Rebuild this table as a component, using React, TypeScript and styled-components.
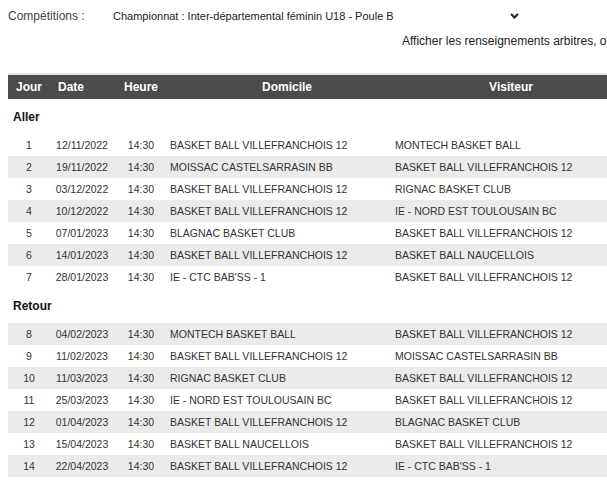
import styled, { createGlobalStyle } from "styled-components";

const GlobalStyle = createGlobalStyle`
    html, body {
        margin: 0;
        padding: 0;
        background-color: #ffffff;
        overflow: hidden;
    }
    body {
        font-family: "Liberation Sans", Arial, sans-serif;
        color: #333333;
    }
`;

const Page = styled.div`
    width: 607px;
    height: 489px;
    overflow: hidden;
`;

const FilterRow = styled.div`
    display: flex;
    align-items: center;
    height: 20px;
    padding: 6px 0 0 8px;
`;

const FilterLabel = styled.span`
    width: 104px;
    font-size: 12px;
    color: #444444;
`;

const SelectBox = styled.div`
    display: flex;
    align-items: center;
    justify-content: space-between;
    width: 406px;
    font-size: 11px;
    color: #222222;
    padding-left: 1px;
`;

const InfoLine = styled.div`
    margin-top: 8px;
    padding-left: 402px;
    height: 14px;
    line-height: 14px;
    font-size: 12px;
    color: #222222;
    white-space: nowrap;
    overflow: hidden;
`;

const Table = styled.div`
    margin: 25px 0 0 8px;
    width: 623px;
    border-top: 2px solid #e4e4e4;
`;

const columns = "42px 64px 54px 223px 1fr";

const HeadRow = styled.div`
    display: grid;
    grid-template-columns: ${columns};
    height: 24px;
    align-items: center;
    background-color: #4b4b4b;
    color: #ffffff;
    font-size: 12px;
    font-weight: 700;
`;

const HeadCell = styled.div<{ $align?: "left" | "center"; $pad?: number }>`
    text-align: ${(p) => p.$align ?? "center"};
    padding-left: ${(p) => p.$pad ?? 0}px;
`;

const SectionRow = styled.div`
    height: 35px;
    padding: 11px 0 0 5px;
    box-sizing: border-box;
    font-size: 12px;
    font-weight: 700;
    color: #111111;
`;

const Row = styled.div<{ $shade: boolean }>`
    display: grid;
    grid-template-columns: ${columns};
    height: 22px;
    align-items: center;
    background-color: ${(p) => (p.$shade ? "#ebebeb" : "#ffffff")};
    font-size: 10.5px;
    color: #333333;
    white-space: nowrap;
`;

const Cell = styled.div<{ $align?: "left" | "center"; $pad?: number }>`
    text-align: ${(p) => p.$align ?? "center"};
    padding-left: ${(p) => p.$pad ?? 0}px;
`;

type Match = [number, string, string, string];

const BBV = "BASKET BALL VILLEFRANCHOIS 12";

const aller: Match[] = [
    [1, "12/11/2022", BBV, "MONTECH BASKET BALL"],
    [2, "19/11/2022", "MOISSAC CASTELSARRASIN BB", BBV],
    [3, "03/12/2022", BBV, "RIGNAC BASKET CLUB"],
    [4, "10/12/2022", BBV, "IE - NORD EST TOULOUSAIN BC"],
    [5, "07/01/2023", "BLAGNAC BASKET CLUB", BBV],
    [6, "14/01/2023", BBV, "BASKET BALL NAUCELLOIS"],
    [7, "28/01/2023", "IE - CTC BAB'SS - 1", BBV],
];

const retour: Match[] = [
    [8, "04/02/2023", "MONTECH BASKET BALL", BBV],
    [9, "11/02/2023", BBV, "MOISSAC CASTELSARRASIN BB"],
    [10, "11/03/2023", "RIGNAC BASKET CLUB", BBV],
    [11, "25/03/2023", "IE - NORD EST TOULOUSAIN BC", BBV],
    [12, "01/04/2023", BBV, "BLAGNAC BASKET CLUB"],
    [13, "15/04/2023", "BASKET BALL NAUCELLOIS", BBV],
    [14, "22/04/2023", BBV, "IE - CTC BAB'SS - 1"],
];

function Chevron() {
    return (
        <svg width="9" height="6" viewBox="0 0 9 6">
            <path d="M1 1 L4.5 4.5 L8 1" fill="none" stroke="#222" strokeWidth="2" />
        </svg>
    );
}

function Rows({ list }: { list: Match[] }) {
    return (
        <>
            {list.map(([jour, date, home, away]) => (
                <Row key={jour} $shade={jour % 2 === 0}>
                    <Cell>{jour}</Cell>
                    <Cell>{date}</Cell>
                    <Cell>14:30</Cell>
                    <Cell $align="left" $pad={2}>{home}</Cell>
                    <Cell $align="left" $pad={4}>{away}</Cell>
                </Row>
            ))}
        </>
    );
}

function App() {
    return (
        <Page>
            <GlobalStyle />
            <FilterRow>
                <FilterLabel>Compétitions :</FilterLabel>
                <SelectBox>
                    <span>Championnat : Inter-départemental féminin U18 - Poule B</span>
                    <Chevron />
                </SelectBox>
            </FilterRow>
            <InfoLine>Afficher les renseignements arbitres, officiels et salles</InfoLine>
            <Table>
                <HeadRow>
                    <HeadCell>Jour</HeadCell>
                    <HeadCell $align="left" $pad={8}>Date</HeadCell>
                    <HeadCell>Heure</HeadCell>
                    <HeadCell $pad={15}>Domicile</HeadCell>
                    <HeadCell>Visiteur</HeadCell>
                </HeadRow>
                <SectionRow>Aller</SectionRow>
                <Rows list={aller} />
                <SectionRow>Retour</SectionRow>
                <Rows list={retour} />
            </Table>
        </Page>
    );
}

export default App;
